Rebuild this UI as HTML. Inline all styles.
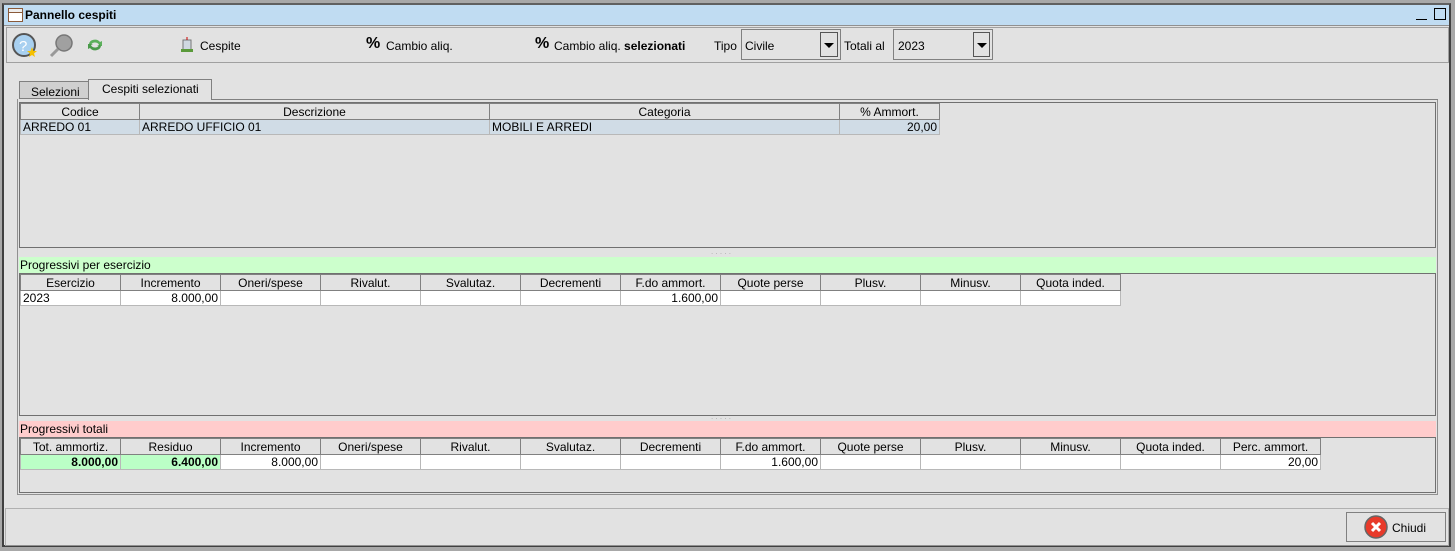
<!DOCTYPE html>
<html><head><meta charset="utf-8"><style>
*{margin:0;padding:0;box-sizing:border-box}
body{width:1455px;height:551px;background:#a8a8a8;font-family:"Liberation Sans",sans-serif;font-size:12px;color:#000;position:relative;overflow:hidden}
.a{position:absolute}
table{border-collapse:collapse;table-layout:fixed;position:absolute}
td,th{height:16px;font-weight:normal;white-space:nowrap;overflow:hidden;padding:0 2px;font-size:12px;line-height:14px}
th{background:#e2e2e2;border:1px solid #808080;text-align:center}
td{background:#fff;border:1px solid #b8b8b8;height:15px}
.r{text-align:right}
.g{background:#bbffc6;font-weight:bold}
.s td{background:#d0dce6}
</style></head><body>
<div class="a" style="left:2px;top:3px;width:1449px;height:544px;background:#e2e2e2;border:2px solid #404040;border-top-color:#606060"></div>
<div class="a" style="left:4px;top:5px;width:1445px;height:21px;background:#c0dcf2;border-bottom:1px solid #909090"></div>
<svg class="a" style="left:8px;top:8px" width="15" height="14"><rect x="0.5" y="0.5" width="14" height="13" fill="#fff" stroke="#8a5a3a"/><rect x="0.5" y="0.5" width="14" height="4" fill="#eee" stroke="#8a5a3a"/></svg>
<div class="a" style="left:25px;top:8px;font-weight:bold;font-size:12px">Pannello cespiti</div>
<div class="a" style="left:1416px;top:19px;width:11px;height:1px;background:#000"></div>
<div class="a" style="left:1434px;top:8px;width:12px;height:12px;border:1px solid #000"></div>
<div class="a" style="left:6px;top:27px;width:1443px;height:36px;border:1px solid #a0a0a0"></div>
<svg class="a" style="left:12px;top:33px" width="26" height="26"><circle cx="12" cy="12" r="11" fill="#a8d0f0" stroke="#555" stroke-width="2"/><text x="7" y="18" font-size="15" fill="#fff" font-family="Liberation Sans">?</text><polygon points="20,14 21.5,18 25,18 22,20.5 23,24 20,22 17,24 18,20.5 15,18 18.5,18" fill="#f5c000"/></svg>
<svg class="a" style="left:49px;top:33px" width="26" height="26"><circle cx="15" cy="10" r="8" fill="#a0a0a0" stroke="#777" stroke-width="1.5"/><line x1="9" y1="16" x2="2" y2="23" stroke="#999" stroke-width="3"/></svg>
<svg class="a" style="left:86px;top:37px" width="18" height="16"><path d="M3 7a6 5 0 0 1 11-2l2-1v5h-5l2-1a4 3 0 0 0-8 1z" fill="#5bb05b"/><path d="M15 9a6 5 0 0 1-11 2l-2 1V7h5l-2 1a4 3 0 0 0 8-1z" fill="#4a9a4a"/></svg>
<svg class="a" style="left:181px;top:37px" width="12" height="15"><rect x="2" y="3" width="8" height="10" fill="#cfd8e0" stroke="#777"/><rect x="0" y="12" width="12" height="3" fill="#5a9a3a"/><line x1="6" y1="0" x2="6" y2="3" stroke="#c00"/></svg>
<div class="a" style="left:200px;top:39px">Cespite</div>
<div class="a" style="left:366px;top:35px;font-size:16px;font-weight:bold">%</div>
<div class="a" style="left:386px;top:39px">Cambio aliq.</div>
<div class="a" style="left:535px;top:35px;font-size:16px;font-weight:bold">%</div>
<div class="a" style="left:554px;top:39px">Cambio aliq. <b>selezionati</b></div>
<div class="a" style="left:714px;top:39px">Tipo</div>
<div class="a" style="left:741px;top:29px;width:100px;height:31px;border:1px solid #808080;background:#e2e2e2"><span class="a" style="left:3px;top:9px">Civile</span><div class="a" style="left:78px;top:2px;width:18px;height:25px;border:1px solid #555"><svg class="a" style="left:3px;top:10px" width="10" height="6"><polygon points="0,0 10,0 5,5" fill="#000"/></svg></div></div>
<div class="a" style="left:844px;top:39px">Totali al</div>
<div class="a" style="left:893px;top:29px;width:100px;height:31px;border:1px solid #808080;background:#e2e2e2"><span class="a" style="left:4px;top:9px">2023</span><div class="a" style="left:79px;top:2px;width:17px;height:25px;border:1px solid #555"><svg class="a" style="left:3px;top:10px" width="10" height="6"><polygon points="0,0 10,0 5,5" fill="#000"/></svg></div></div>
<!-- tabs -->
<div class="a" style="left:19px;top:81px;width:70px;height:18px;border:1px solid #808080;background:#d0d0d0;padding:3px 0 0 11px">Selezioni</div>
<div class="a" style="left:88px;top:79px;width:124px;height:21px;border:1px solid #808080;border-bottom:none;background:#e2e2e2;padding:2px 0 0 13px">Cespiti selezionati</div>
<div class="a" style="left:17px;top:99px;width:1421px;height:396px;border:1px solid #909090;border-top:none"></div>
<div class="a" style="left:212px;top:99px;width:1226px;height:1px;background:#808080"></div>
<div class="a" style="left:19px;top:102px;width:1417px;height:146px;border:1px solid #707070"></div>
<table style="left:20px;top:103px"><colgroup><col width="119"><col width="350"><col width="350"><col width="100"></colgroup>
<tr><th>Codice</th><th>Descrizione</th><th>Categoria</th><th>% Ammort.</th></tr>
<tr class="s"><td>ARREDO 01</td><td>ARREDO UFFICIO 01</td><td>MOBILI E ARREDI</td><td class="r">20,00</td></tr></table>
<div class="a" style="left:711px;top:247px;color:#aaa;font-size:8px">. . . . .</div>
<div class="a" style="left:19px;top:257px;width:1417px;height:16px;background:#ccffcc;padding:1px 0 0 1px">Progressivi per esercizio</div>
<div class="a" style="left:19px;top:273px;width:1417px;height:143px;border:1px solid #707070"></div>
<table style="left:20px;top:274px"><colgroup><col width="100"><col width="100"><col width="100"><col width="100"><col width="100"><col width="100"><col width="100"><col width="100"><col width="100"><col width="100"><col width="100"></colgroup>
<tr><th>Esercizio</th><th>Incremento</th><th>Oneri/spese</th><th>Rivalut.</th><th>Svalutaz.</th><th>Decrementi</th><th>F.do ammort.</th><th>Quote perse</th><th>Plusv.</th><th>Minusv.</th><th>Quota inded.</th></tr>
<tr><td>2023</td><td class="r">8.000,00</td><td></td><td></td><td></td><td></td><td class="r">1.600,00</td><td></td><td></td><td></td><td></td></tr></table>
<div class="a" style="left:711px;top:412px;color:#aaa;font-size:8px">. . . . .</div>
<div class="a" style="left:19px;top:421px;width:1417px;height:16px;background:#ffcccc;padding:1px 0 0 1px">Progressivi totali</div>
<div class="a" style="left:19px;top:437px;width:1417px;height:56px;border:1px solid #707070"></div>
<table style="left:20px;top:438px"><colgroup><col width="100"><col width="100"><col width="100"><col width="100"><col width="100"><col width="100"><col width="100"><col width="100"><col width="100"><col width="100"><col width="100"><col width="100"><col width="100"></colgroup>
<tr><th>Tot. ammortiz.</th><th>Residuo</th><th>Incremento</th><th>Oneri/spese</th><th>Rivalut.</th><th>Svalutaz.</th><th>Decrementi</th><th>F.do ammort.</th><th>Quote perse</th><th>Plusv.</th><th>Minusv.</th><th>Quota inded.</th><th>Perc. ammort.</th></tr>
<tr><td class="r g">8.000,00</td><td class="r g">6.400,00</td><td class="r">8.000,00</td><td></td><td></td><td></td><td></td><td class="r">1.600,00</td><td></td><td></td><td></td><td></td><td class="r">20,00</td></tr></table>
<div class="a" style="left:5px;top:508px;width:1444px;height:38px;border:1px solid #b0b0b0;border-bottom-color:#909090"></div>
<div class="a" style="left:1346px;top:512px;width:100px;height:30px;border:1px solid #808080"></div>
<svg class="a" style="left:1364px;top:515px" width="24" height="24"><circle cx="12" cy="12" r="11" fill="#e83a2a" stroke="#666" stroke-width="1.5"/><path d="M8 8l8 8M16 8l-8 8" stroke="#fff" stroke-width="3"/></svg>
<div class="a" style="left:1392px;top:521px">Chiudi</div>
</body></html>
